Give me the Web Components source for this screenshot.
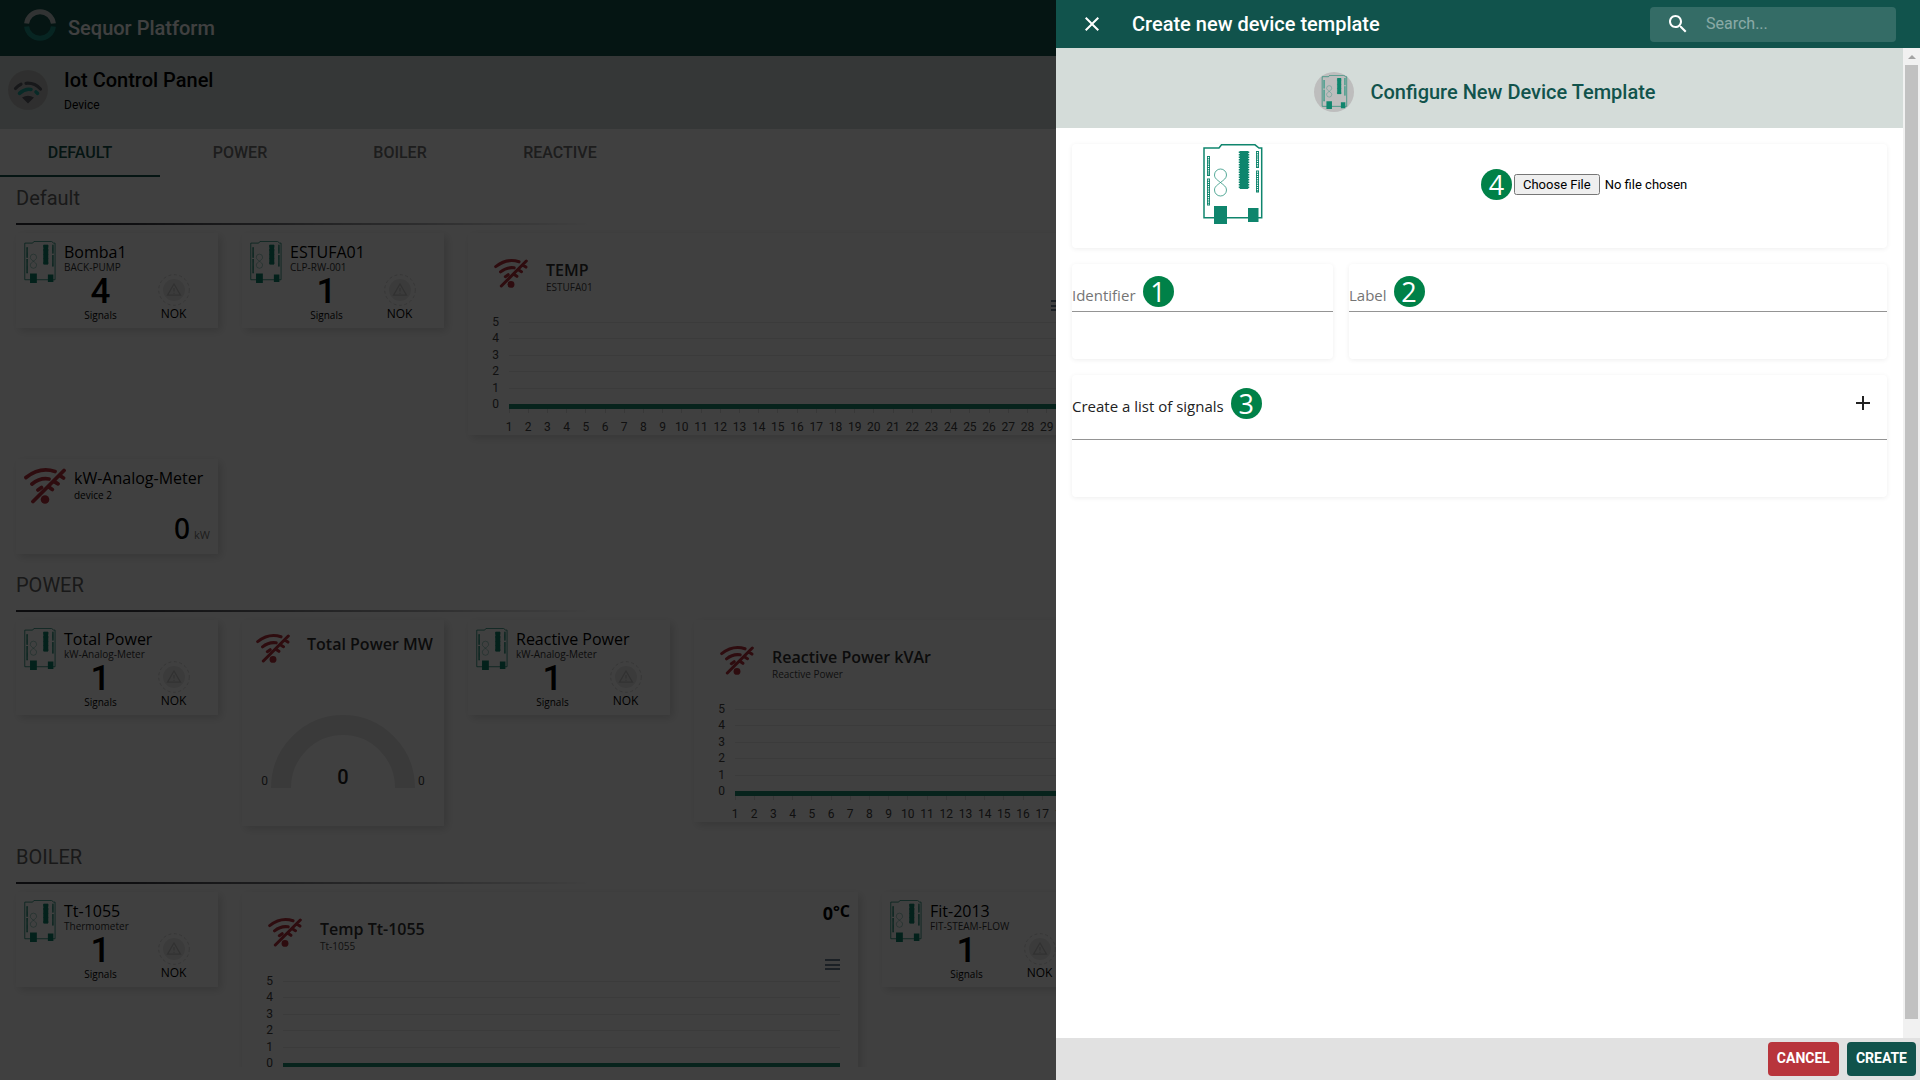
<!DOCTYPE html>
<html lang="en">
<head>
<meta charset="utf-8">
<title>Sequor Platform</title>
<style>
html, body { margin: 0; height: 100%; overflow: hidden; }
body { font-family: "Open Sans", "Noto Sans", sans-serif; color: #000; background: #fff; }
</style>
</head>
<body>
<sequor-app></sequor-app>

<template id="t-app">
<style>
:host { display: block; height: 100vh; position: relative; overflow: hidden; }
.page { height: 100%; display: flex; flex-direction: column; background: #fff; }
main { flex: 1; min-height: 0; overflow: hidden; padding: 0 16px; margin-bottom: 13px; }
.scrim { position: absolute; inset: 0; background: rgba(0,0,0,.75); }
create-drawer { position: absolute; top: 0; right: 0; bottom: 0; width: 45%; }
</style>
<div class="page">
  <platform-bar></platform-bar>
  <panel-heading></panel-heading>
  <panel-tabs></panel-tabs>
  <main>
    <device-group heading="Default">
      <device-row>
        <signal-card name="Bomba1" device="BACK-PUMP" count="4"></signal-card>
        <signal-card name="ESTUFA01" device="CLP-RW-001" count="1"></signal-card>
        <chart-card name="TEMP" device="ESTUFA01" points="30"></chart-card>
      </device-row>
      <device-row>
        <value-card name="kW-Analog-Meter" device="device 2" value="0" unit="kW"></value-card>
      </device-row>
    </device-group>
    <device-group heading="POWER">
      <device-row>
        <signal-card name="Total Power" device="kW-Analog-Meter" count="1"></signal-card>
        <gauge-card name="Total Power MW"></gauge-card>
        <signal-card name="Reactive Power" device="kW-Analog-Meter" count="1"></signal-card>
        <chart-card name="Reactive Power kVAr" device="Reactive Power" points="30"></chart-card>
      </device-row>
    </device-group>
    <device-group heading="BOILER">
      <device-row>
        <signal-card name="Tt-1055" device="Thermometer" count="1"></signal-card>
        <chart-card name="Temp Tt-1055" device="Tt-1055" reading="0"></chart-card>
        <signal-card name="Fit-2013" device="FIT-STEAM-FLOW" count="1"></signal-card>
      </device-row>
    </device-group>
  </main>
</div>
<div class="scrim"></div>
<create-drawer></create-drawer>
</template>

<template id="t-bar">
<style>
:host { display: flex; align-items: center; height: 56px; flex: none; background: #14534c; padding: 0 24px; gap: 12px; color: #fff; font: 500 20px/24px Roboto, sans-serif; }
svg { display: block; margin-bottom: 6px; }
</style>
<svg width="32" height="32" viewBox="0 0 32 32" fill="none" stroke-width="5"><path d="M2.6 14.5a13.5 13.5 0 0 1 26.800 0" stroke="#c4cccc"/><path d="M2.600 17.500a13.500 13.500 0 0 0 26.800 0" stroke="#1f9488"/></svg>
<span>Sequor Platform</span>
</template>

<template id="t-heading">
<style>
:host { display: flex; height: 73px; flex: none; box-sizing: border-box; background: #d4dcd9; padding: 12px 8px; gap: 16px; font-family: Roboto, sans-serif; }
svg { display: block; margin-top: 2px; }
h1 { margin: 0; font: 500 20px/24px Roboto, sans-serif; }
p { margin: 5px 0 0; font-size: 12px; line-height: 16px; }
</style>
<svg width="40" height="40" viewBox="0 0 40 40" fill="none" stroke-linecap="round"><circle cx="20" cy="20" r="20" fill="#bdbdbd"/><path d="M7.500 18.500q2.500-3 5.500-4.300M18 13.300q8.500-.8 14.500 5.700" stroke="#5c5f68" stroke-width="3.200"/><path d="M11.500 23.300q5.500-5 11.500-3.800M28 22l1.500 1.300" stroke="#22a79c" stroke-width="3.600"/><path d="M14 27.500q6-3.500 12 0l-6 6z" fill="#5c5f68"/></svg>
<div><h1>Iot Control Panel</h1><p>Device</p></div>
</template>

<template id="t-tabs">
<style>
:host { display: flex; height: 48px; flex: none; }
button { width: 160px; border: 0; border-bottom: 2px solid transparent; background: none; padding: 2px 0 0; color: #757575; font: 500 16px/20px Roboto, sans-serif; }
button[aria-selected="true"] { color: #14534c; border-color: #14534c; }
</style>
<button role="tab" aria-selected="true">DEFAULT</button>
<button role="tab">POWER</button>
<button role="tab">BOILER</button>
<button role="tab">REACTIVE</button>
</template>

<template id="t-group">
<style>
:host { display: block; padding-top: 8px; margin-bottom: 10px; }
h2 { margin: 0; font: 400 20px/26px Roboto, sans-serif; color: #666; }
hr { border: 0; height: 2px; margin: 12px 0 8px; width: 576px; background: linear-gradient(90deg, #303038, #303038 15%, transparent); }
.rows { display: flex; flex-direction: column; gap: 24px; }
</style>
<h2></h2><hr><div class="rows"><slot></slot></div>
</template>

<template id="t-row">
<style>:host { display: flex; align-items: flex-start; gap: 24px; }</style>
<slot></slot>
</template>

<template id="t-board">
<style>:host { display: block; } svg { display: block; width: 100%; height: 100%; }</style>
<svg viewBox="0 0 60 80" fill="none" stroke="#0f856d"><path d="M1 4h15l2.500-3.200H52L56 4h2.700v69.800H1z" stroke-width="1.500"/><path d="M17.500 38.500c-3-2.500-6-4-6-7.500a6 6 0 0 1 12 0c0 3.500-3 5-6 7.500s-6 4-6 7.500a6 6 0 0 0 12 0c0-3.500-3-5-6-7.500z" stroke-width=".7"/><path d="M5.500 12v20M5.500 34.500v27M54.500 7v17M54.500 26.500v22" stroke-width="3"/><path d="M5.500 13v18M5.500 35.500v25M54.500 8v15M54.500 27.500v20" stroke="#fff" stroke-width="1.200" stroke-dasharray="1.200 1"/><path d="M41 7v38" stroke-width="8.500"/><path d="M41 7.500v37.500" stroke-width="10.500" stroke-dasharray="1.500 1"/><path d="M11 62h13v18H11zM45 64h10.500v14H45z" fill="#0f856d" stroke="none"/></svg>
</template>

<template id="t-nowifi">
<style>:host { display: block; flex: none; } svg { display: block; width: 100%; height: 100%; }</style>
<svg viewBox="0 0 42 36" fill="none" stroke="#b8323c" stroke-width="3.800" stroke-linecap="round"><path d="M2 9.500Q16-1.500 31 3.500M8 16Q16 9.500 25 11M14 22l3.500-2.500M9 33.500L40 2.500M36.500 8l3 2M31 14l3 1.800M25.500 19.500l2.800 2"/><circle cx="21" cy="31.500" r="4.300" fill="#b8323c" stroke="none"/></svg>
</template>

<template id="t-signal">
<style>
:host { display: grid; grid-template-columns: 32px 1fr; column-gap: 8px; box-sizing: border-box; width: 202px; height: 95px; flex: none; padding: 8px; background: #fff; box-shadow: 3px 3px 8px rgba(0,0,0,.14); }
board-icon { width: 32px; height: 42px; }
.name { font-size: 16px; line-height: 22px; }
.dev { font-size: 10px; line-height: 12px; margin-top: -2px; color: #333; }
.head { height: 32px; white-space: nowrap; }
.stats { grid-column: 1 / 3; display: flex; margin-top: -8px; padding-left: 40px; }
.stats > div { width: 73px; text-align: center; }
.count { font: 500 35px/34px Roboto, sans-serif; }
.sig { font-size: 10px; line-height: 12px; }
.nok { font-size: 12px; line-height: 16px; }
svg { display: block; margin: -1px auto 0; }
</style>
<board-icon></board-icon>
<div class="head"><div class="name"></div><div class="dev"></div></div>
<div class="stats">
  <div><div class="count"></div><div class="sig">Signals</div></div>
  <div><svg width="32" height="32" viewBox="0 0 32 32" fill="none"><circle cx="16" cy="16" r="15.300" stroke="#d8d8d8" stroke-dasharray="3 2.500"/><circle cx="16" cy="16" r="11" fill="#ebebeb"/><path d="M16 10l6.500 11.200h-13zM16 14v3.500M16 18.800v1" stroke="#c4c4c4" stroke-width="1.300"/></svg><div class="nok">NOK</div></div>
</div>
</template>

<template id="t-value">
<style>
:host { display: flex; flex-direction: column; justify-content: space-between; box-sizing: border-box; width: 202px; height: 95px; padding: 8px 8px 2px; background: #fff; box-shadow: 3px 3px 8px rgba(0,0,0,.14); }
.head { display: flex; gap: 8px; white-space: nowrap; padding-top: 1px; }
no-wifi { width: 42px; height: 36px; }
.name { font-size: 16px; line-height: 20px; }
.dev { font-size: 10px; line-height: 14px; }
.val { display: flex; justify-content: flex-end; align-items: baseline; gap: 4px; line-height: 34px; }
.num { font: 500 28px/34px "Noto Sans", sans-serif; }
.unit { font-size: 11px; color: #757575; }
</style>
<div class="head"><no-wifi></no-wifi><div><div class="name"></div><div class="dev"></div></div></div>
<div class="val"><span class="num"></span><span class="unit"></span></div>
</template>

<template id="t-gauge">
<style>
:host { display: flex; flex-direction: column; justify-content: space-between; box-sizing: border-box; width: 202px; height: 206px; flex: none; padding: 14px 14px 38px; background: #fff; box-shadow: 3px 3px 8px rgba(0,0,0,.14); }
.head { display: flex; gap: 17px; white-space: nowrap; font-weight: 600; font-size: 16px; line-height: 20px; color: #333; }
no-wifi { width: 34px; height: 29px; }
.g { display: flex; align-items: flex-end; justify-content: center; gap: 3px; font: 12px/14px Roboto, sans-serif; color: #444; }
.arc { display: grid; }
.arc > * { grid-area: 1 / 1; }
.arc b { align-self: end; justify-self: center; font: 500 20px/22px Roboto, sans-serif; color: #222; }
svg { display: block; }
</style>
<div class="head"><no-wifi></no-wifi><span class="name"></span></div>
<div class="g"><span>0</span><div class="arc"><svg width="144" height="74" viewBox="0 0 144 74"><path d="M10 74a62 63 0 0 1 124 0" fill="none" stroke="#e7e7e7" stroke-width="20"/></svg><b>0</b></div><span>0</span></div>
</template>

<template id="t-chart">
<style>
:host { display: flex; flex-direction: column; box-sizing: border-box; width: 616px; height: 202px; flex: none; padding: 26px 18px 2px 26px; background: #fff; box-shadow: 3px 3px 8px rgba(0,0,0,.14); position: relative; }
.head { display: flex; gap: 18px; height: 44px; }
no-wifi { width: 34px; height: 29px; }
.name { font-weight: 600; font-size: 16px; line-height: 20px; color: #333; padding-top: 1px; }
.dev { font-size: 10px; line-height: 14px; color: #444; }
.read { position: absolute; top: 9px; right: 8px; font-weight: 700; font-size: 18px; line-height: 24px; }
.read sup { font-size: 16px; line-height: 0; vertical-align: 3px; }
.menu { align-self: flex-end; width: 15px; height: 11px; box-sizing: border-box; padding: 0; border: solid #6e8192; border-width: 2px 0; background: linear-gradient(#6e8192, #6e8192) center / 100% 2px no-repeat; }
.body { display: flex; gap: 10px; margin-top: 3px; font: 12px/16px Roboto, sans-serif; color: #444; }
.y { display: flex; flex-direction: column; width: 5px; align-items: flex-end; line-height: 15px; height: 97px; padding-top: 1px; justify-content: space-between; }
.p { flex: 1; margin-top: 8px; }
.grid { height: 82px; display: grid; grid-template-rows: repeat(5, 1fr); border-bottom: 5px solid #1f8a70; }
.grid i { border-top: 1px solid #eaeaea; }
.x { display: flex; justify-content: space-between; height: 24px; }
.x span { width: 0; display: flex; flex-direction: column; align-items: center; gap: 6px; }
.x span::before { content: ""; width: 1px; height: 4px; background: #ddd; flex: none; }
</style>
<div class="head"><no-wifi></no-wifi><div><div class="name"></div><div class="dev"></div></div></div>
<button class="menu" aria-label="Chart menu"></button>
<div class="body"><div class="y"><span>5</span><span>4</span><span>3</span><span>2</span><span>1</span><span>0</span></div>
<div class="p"><div class="grid"><i></i><i></i><i></i><i></i><i></i></div><div class="x"></div></div></div>
</template>

<template id="t-badge">
<style>
:host { display: inline-flex; align-items: center; justify-content: center; width: 31px; height: 31px; border-radius: 50%; background: #008148; color: #fff; font: 27px/31px "Open Sans", sans-serif; flex: none; }
</style><slot></slot>
</template>

<template id="t-field">
<style>
:host { display: block; background: #fff; box-shadow: 0 1px 5px rgba(0,0,0,.07); border-radius: 4px; height: 95px; }
.f { height: 48px; box-sizing: border-box; border-bottom: 1px solid #949494; display: flex; align-items: flex-end; gap: 7px; padding-bottom: 4px; }
label { font-size: 15px; line-height: 24px; color: #757575; }
input { flex: 1; min-width: 0; border: 0; outline: 0; background: none; font: inherit; height: 24px; padding: 0; }
</style>
<div class="f"><label for="i"></label><step-badge></step-badge><input id="i" type="text"></div>
</template>

<template id="t-drawer">
<style>
:host { display: flex; flex-direction: column; background: #fff; }
header { height: 48px; flex: none; display: flex; align-items: center; background: #11534c; color: #fff; padding: 0 24px; box-sizing: border-box; }
h2, h3 { margin: 0; font: 500 20px/24px Roboto, sans-serif; }
header h2 { flex: 1; padding-left: 28px; }
button { font: 500 14px/20px Roboto, sans-serif; border: 0; color: #fff; background: none; padding: 0; }
svg { display: block; }
.search { display: flex; align-items: center; box-sizing: border-box; width: 246px; height: 35px; border-radius: 4px; background: rgba(255,255,255,.15); padding: 0 16px; gap: 16px; }
.search input { flex: 1; min-width: 0; border: 0; outline: 0; background: none; color: #fff; padding: 0; font: 16px/20px Roboto, sans-serif; }
.search input::placeholder { color: #fff; opacity: .42; }
.mid { flex: 1; min-height: 0; display: flex; }
.content { flex: 1; min-width: 0; }
.title { height: 80px; background: #d4dcd9; display: flex; align-items: center; justify-content: center; gap: 16px; color: #11534c; padding: 8px 0 0 11px; box-sizing: border-box; }
.disc { width: 40px; height: 40px; border-radius: 50%; background: #bdbdbd; display: flex; align-items: center; justify-content: center; }
.disc board-icon { width: 27px; height: 34px; }
form { padding: 16px; display: grid; grid-template-columns: 261px 1fr; gap: 16px; }
.card { grid-column: 1 / 3; background: #fff; box-shadow: 0 1px 5px rgba(0,0,0,.07); border-radius: 4px; }
.file { height: 104px; display: grid; grid-template-columns: 322px 1fr; }
.file board-icon { width: 60px; height: 80px; justify-self: center; }
.pick { display: flex; align-items: center; height: 81px; gap: 2px; padding-left: 87px; }
.pick input { font: 13px/16px Roboto, "Liberation Sans", sans-serif; }
.pick input::file-selector-button { font: 13px/16px Roboto, sans-serif; padding: 1px 7px; margin-inline-end: 5px; }
.list { height: 122px; }
.bar { height: 65px; box-sizing: border-box; border-bottom: 1px solid #949494; display: flex; align-items: center; padding: 0 12px 8px 0; gap: 7px; font-size: 15px; line-height: 24px; color: #222; }
.bar span { padding-top: 5px; }
.bar button { margin-left: auto; }
.sb { width: 17px; background: #f1f1f1; display: flex; flex-direction: column; align-items: center; }
.sb::before { content: ""; border: 4px solid transparent; border-top: 0; border-bottom: 4px solid #a3a3a3; margin: 7px 0 6px; }
.sb::after { content: ""; width: 13px; flex: 1; background: #c1c1c1; margin-bottom: 19px; }
footer { height: 42px; flex: none; box-sizing: border-box; background: #e1e1e1; display: flex; justify-content: flex-end; gap: 8px; padding: 4px; }
footer button { height: 34px; border-radius: 4px; padding: 0 9px 2px; background: #11534c; font-weight: 700; }
footer .no { background: #b8353c; }
</style>
<header>
  <button aria-label="Close"><svg width="24" height="24" viewBox="0 0 24 24" fill="#fff"><path d="M19 6.410L17.590 5 12 10.590 6.410 5 5 6.410 10.590 12 5 17.590 6.410 19 12 13.410 17.590 19 19 17.590 13.410 12z"/></svg></button>
  <h2>Create new device template</h2>
  <div class="search"><svg width="24" height="24" viewBox="0 0 24 24" fill="#fff"><path d="M15.500 14h-.79l-.28-.27C15.410 12.590 16 11.110 16 9.500 16 5.910 13.090 3 9.500 3S3 5.910 3 9.500 5.910 16 9.500 16c1.610 0 3.090-.59 4.230-1.570l.27.28v.79l5 4.990L20.490 19l-4.990-5zm-6 0C7.010 14 5 11.990 5 9.500S7.010 5 9.500 5 14 7.010 14 9.500 11.990 14 9.500 14z"/></svg><input type="search" aria-label="Search" placeholder="Search..."></div>
</header>
<div class="mid">
  <div class="content">
    <div class="title"><div class="disc"><board-icon></board-icon></div><h3>Configure New Device Template</h3></div>
    <form>
      <div class="card file"><board-icon></board-icon><div class="pick"><step-badge>4</step-badge><input type="file" aria-label="Device picture"></div></div>
      <line-field label="Identifier" step="1"></line-field>
      <line-field label="Label" step="2"></line-field>
      <div class="card list"><div class="bar"><span>Create a list of signals</span><step-badge>3</step-badge><button type="button" aria-label="Add signal"><svg width="24" height="24" viewBox="0 0 24 24" fill="#222"><path d="M19 13h-6v6h-2v-6H5v-2h6V5h2v6h6v2z"/></svg></button></div></div>
    </form>
  </div>
  <div class="sb"></div>
</div>
<footer><button class="no">CANCEL</button><button>CREATE</button></footer>
</template>

<script>
function define(tag, templateId, setup) {
  customElements.define(tag, class extends HTMLElement {
    connectedCallback() {
      if (this.shadowRoot) return;
      const root = this.attachShadow({ mode: 'open' });
      root.append(document.getElementById(templateId).content.cloneNode(true));
      if (setup) setup(root, this);
    }
  });
}
function fill(root, host, map) {
  for (const [selector, attr] of Object.entries(map)) {
    root.querySelector(selector).textContent = host.getAttribute(attr) || '';
  }
}
define('board-icon', 't-board');
define('no-wifi', 't-nowifi');
define('step-badge', 't-badge');
define('platform-bar', 't-bar');
define('panel-heading', 't-heading');
define('panel-tabs', 't-tabs');
define('device-group', 't-group', (r, h) => fill(r, h, { h2: 'heading' }));
define('device-row', 't-row');
define('signal-card', 't-signal', (r, h) => fill(r, h, { '.name': 'name', '.dev': 'device', '.count': 'count' }));
define('value-card', 't-value', (r, h) => fill(r, h, { '.name': 'name', '.dev': 'device', '.num': 'value', '.unit': 'unit' }));
define('gauge-card', 't-gauge', (r, h) => fill(r, h, { '.name': 'name' }));
define('chart-card', 't-chart', (r, h) => {
  fill(r, h, { '.name': 'name', '.dev': 'device' });
  const axis = r.querySelector('.x');
  const points = Number(h.getAttribute('points'));
  for (let i = 1; i <= points; i++) {
    const tick = document.createElement('span');
    tick.textContent = i;
    axis.append(tick);
  }
  if (h.hasAttribute('reading')) {
    const out = document.createElement('div');
    out.className = 'read';
    out.innerHTML = h.getAttribute('reading') + '<sup>°C</sup>';
    r.append(out);
  }
});
define('line-field', 't-field', (r, h) => fill(r, h, { label: 'label', 'step-badge': 'step' }));
define('create-drawer', 't-drawer');
define('sequor-app', 't-app');
</script>
</body>
</html>
